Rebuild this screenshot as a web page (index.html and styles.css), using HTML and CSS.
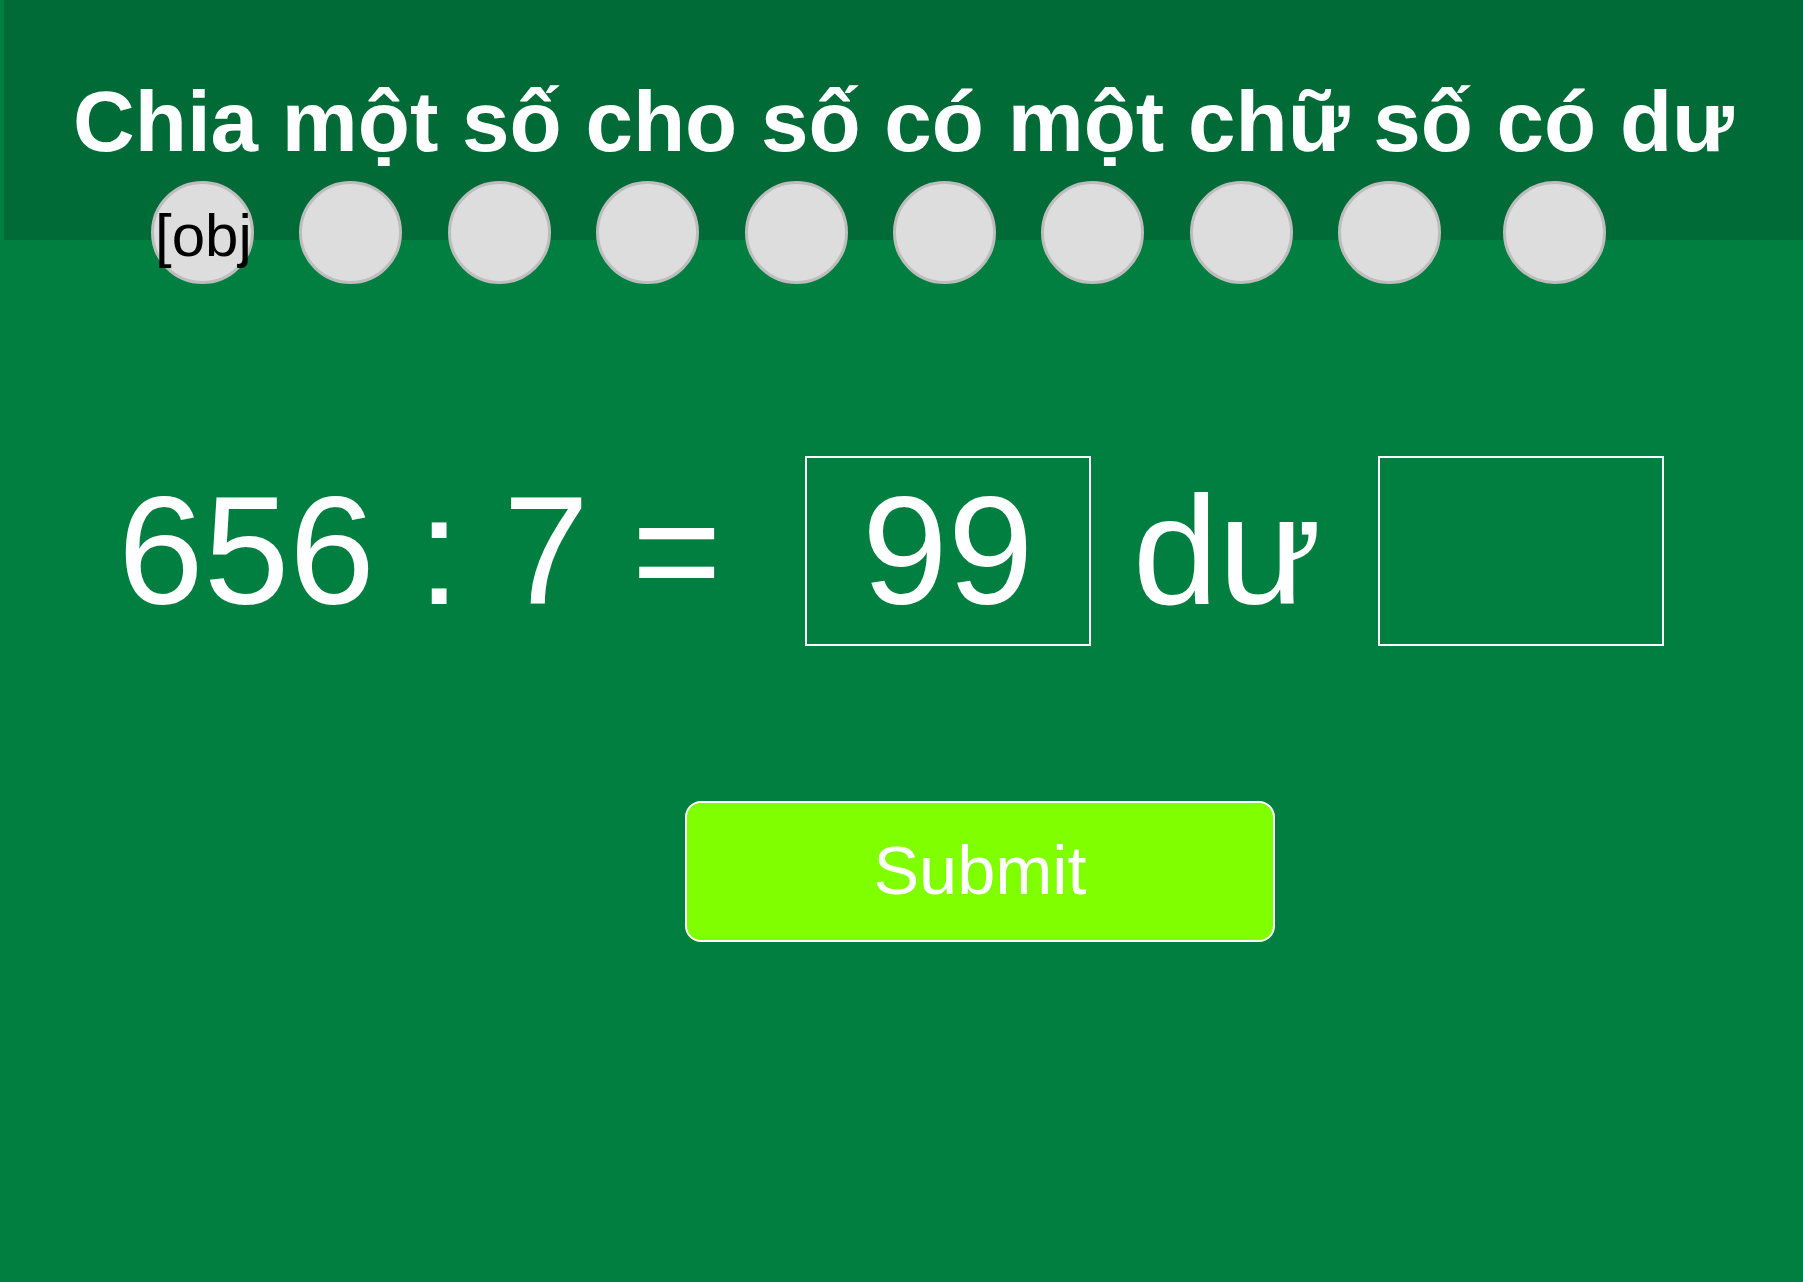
FILE: index.html
```html
<!DOCTYPE html>
<html lang="vi">
<head>
<meta charset="utf-8">
<title>Chia một số cho số có một chữ số có dư</title>
<link rel="stylesheet" href="styles.css">
</head>
<body>
<header class="header">
  <h1 class="title">Chia một số cho số có một chữ số có dư</h1>
  <div class="progress">
    <div class="dot"><span class="dot-label">[obj</span></div>
    <div class="dot"></div>
    <div class="dot"></div>
    <div class="dot"></div>
    <div class="dot"></div>
    <div class="dot"></div>
    <div class="dot"></div>
    <div class="dot"></div>
    <div class="dot"></div>
    <div class="dot dot-last"></div>
  </div>
</header>
<main class="main">
  <div class="equation">
    <span class="expr">656 : 7 =</span>
    <div class="answer-box">99</div>
    <span class="word">dư</span>
    <div class="answer-box"></div>
  </div>
  <div class="actions">
    <button class="submit" type="button">Submit</button>
  </div>
</main>
</body>
</html>
```

FILE: styles.css
```css
html, body {
  margin: 0;
  padding: 0;
}

body {
  background: #007f41;
  font-family: "Liberation Sans", Arial, sans-serif;
  color: #fff;
}

.header {
  margin-left: 4px;
  height: 240px;
  box-sizing: border-box;
  padding-top: 72px;
  background: #006b37;
}

.title {
  margin: 0;
  font-size: 85.4px;
  line-height: 100px;
  font-weight: 700;
  color: #fff;
  text-align: center;
  white-space: nowrap;
}

.progress {
  display: flex;
  gap: 45.4px;
  margin-top: 9px;
  padding-left: 147px;
}

.dot {
  flex: none;
  width: 103px;
  height: 103px;
  box-sizing: border-box;
  border: 3px solid #bdbdbd;
  border-radius: 50%;
  background: #dddddd;
  display: flex;
  align-items: flex-start;
}

.dot-last {
  margin-left: 16px;
}

.dot-label {
  margin-top: 22px;
  padding-left: 1px;
  font-size: 60px;
  line-height: 60px;
  color: #000;
  white-space: nowrap;
}

.equation {
  display: flex;
  align-items: center;
  margin-top: 216px;
  padding-left: 118px;
  font-size: 154px;
  line-height: normal;
}

.expr {
  white-space: pre;
}

.answer-box {
  flex: none;
  width: 286px;
  height: 190px;
  box-sizing: border-box;
  border: 2px solid #fff;
  display: flex;
  align-items: center;
  justify-content: center;
  margin-left: 83px;
}

.word {
  flex: none;
  width: 245px;
  margin-left: 42px;
}

.word + .answer-box {
  margin-left: 0;
}

.actions {
  margin-top: 155px;
  padding-left: 685px;
}

.submit {
  width: 590px;
  height: 141px;
  box-sizing: border-box;
  padding: 0;
  border: 2px solid #fff;
  border-radius: 16px;
  background: #80ff00;
  color: #fff;
  font-family: "Liberation Sans", Arial, sans-serif;
  font-size: 68.5px;
  line-height: 1;
  cursor: pointer;
}
```
